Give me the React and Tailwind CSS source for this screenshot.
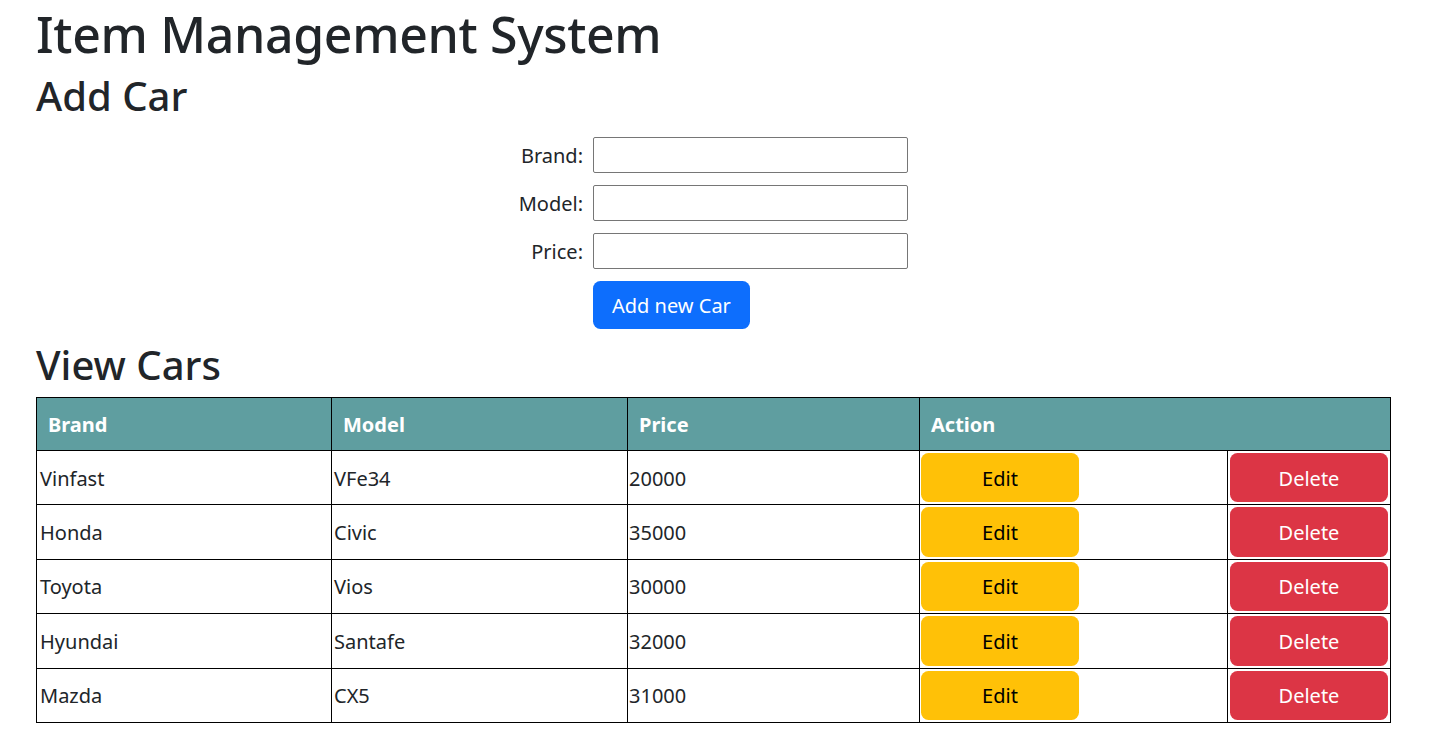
import React from "react";

const cars = [
  { brand: "Vinfast", model: "VFe34", price: "20000" },
  { brand: "Honda", model: "Civic", price: "35000" },
  { brand: "Toyota", model: "Vios", price: "30000" },
  { brand: "Hyundai", model: "Santafe", price: "32000" },
  { brand: "Mazda", model: "CX5", price: "31000" },
];

function Field({ label }) {
  return (
    <div className="flex items-center gap-[10px]">
      <label className="w-[547px] text-right text-[20px] leading-[30px] pt-[2px]">{label}</label>
      <input
        type="text"
        className="w-[315px] h-[36px] border border-[#767676] rounded-[2px] px-2 bg-white outline-none"
      />
    </div>
  );
}

export default function App() {
  return (
    <div className="min-h-screen bg-white text-[#212529] font-['Noto_Sans',sans-serif] px-[36px]">
      <h1 className="text-[50px] leading-[69px] mb-[1px] font-medium tracking-[-0.35px]">
        Item Management System
      </h1>
      <h2 className="text-[40px] leading-[48px] font-medium pt-[2px]">Add Car</h2>

      <div className="mt-[17px] flex flex-col gap-[12px]">
        <Field label="Brand:" />
        <Field label="Model:" />
        <Field label="Price:" />
        <div className="pl-[557px]">
          <button className="h-[48px] px-[19px] pt-[2px] rounded-[7.5px] bg-[#0d6efd] text-white text-[20px] leading-[30px]">
            Add new Car
          </button>
        </div>
      </div>

      <h2 className="mt-[10px] mb-[10px] pt-[2px] h-[48px] text-[40px] leading-[48px] font-medium">View Cars</h2>

      <table className="table-fixed border-collapse w-[1354px] text-[20px] leading-[30px]">
        <colgroup>
          <col className="w-[295px]" />
          <col className="w-[296px]" />
          <col className="w-[292px]" />
          <col className="w-[308px]" />
          <col className="w-[163px]" />
        </colgroup>
        <thead>
          <tr className="bg-[#5f9ea0] text-white h-[53px]">
            <th className="border border-black text-left font-bold px-[11px] pt-[2px]">Brand</th>
            <th className="border border-black text-left font-bold px-[11px] pt-[2px]">Model</th>
            <th className="border border-black text-left font-bold px-[11px] pt-[2px]">Price</th>
            <th colSpan={2} className="border border-black text-left font-bold px-[11px] pt-[2px]">
              Action
            </th>
          </tr>
        </thead>
        <tbody>
          {cars.map((c) => (
            <tr key={c.brand} className="h-[54.4px]">
              <td className="border border-black px-[3px] pt-[2px]">{c.brand}</td>
              <td className="border border-black px-[2px] pt-[2px]">{c.model}</td>
              <td className="border border-black px-[1px] pt-[2px]">{c.price}</td>
              <td className="border border-black pl-[1px] py-[2px]">
                <button className="w-[158px] h-[49.4px] pt-[2px] rounded-[7.5px] bg-[#ffc107] text-black text-[20px]">
                  Edit
                </button>
              </td>
              <td className="border border-black pl-[2px] py-[2px]">
                <button className="w-[158px] h-[49.4px] pt-[2px] rounded-[7.5px] bg-[#dc3545] text-white text-[20px]">
                  Delete
                </button>
              </td>
            </tr>
          ))}
        </tbody>
      </table>
    </div>
  );
}
